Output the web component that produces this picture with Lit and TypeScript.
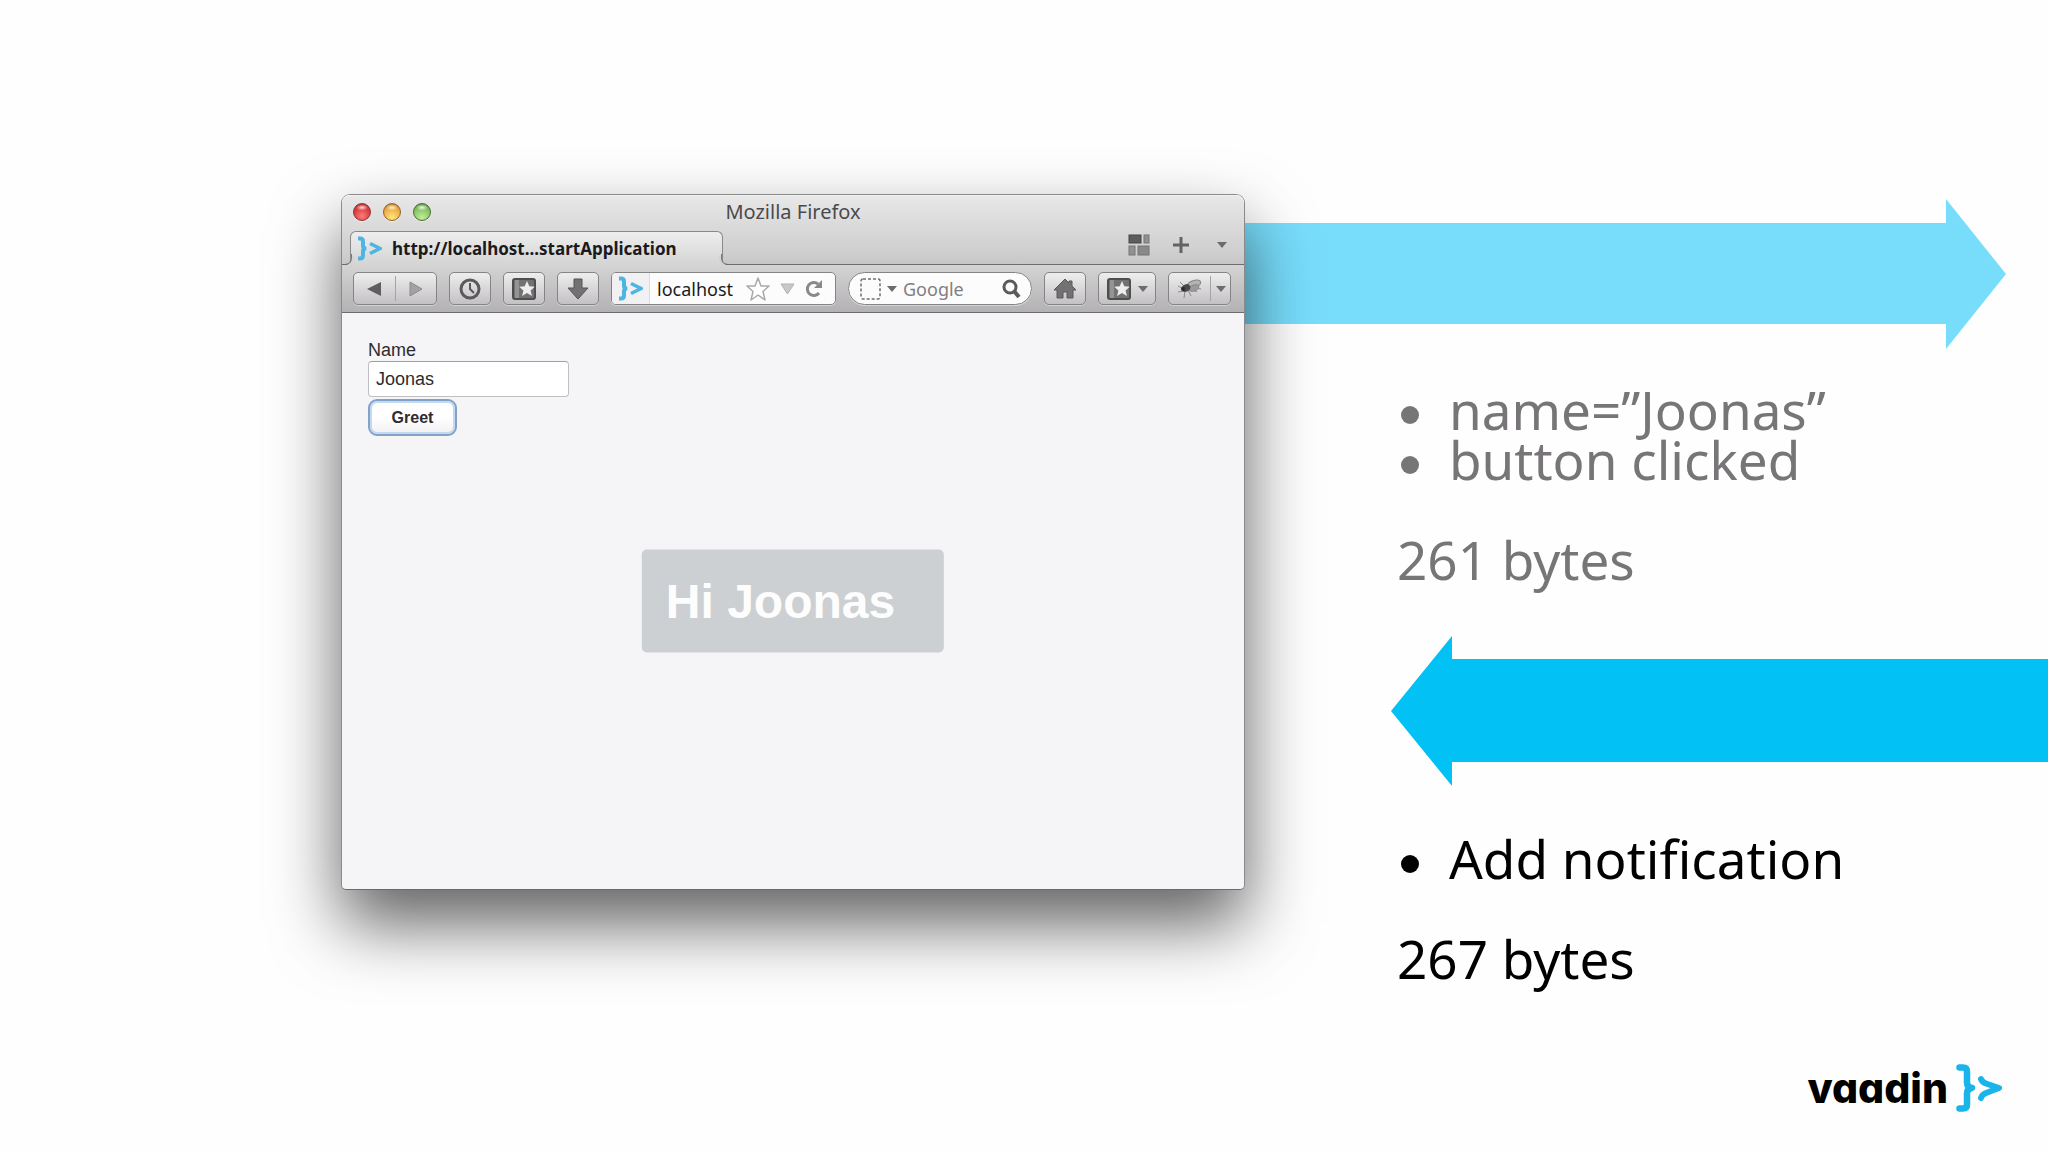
import { LitElement, html, css, svg } from "lit";
import { customElement, property } from "lit/decorators.js";

const caret = (fill = "#6d6c6d") => html`
  <svg width="10" height="6" viewBox="0 0 10 6" aria-hidden="true"><path d="M0 0h10L5 6z" fill=${fill} /></svg>
`;

const brandShapes = svg`
  <path d="M3.500 3.500h3.500q4 0 4 4v11q0 5 5 5.500q-5 .5-5 5.500v11q0 4-4 4h-3.500" fill="none" stroke="currentColor" stroke-width="6.500" stroke-linecap="round" stroke-linejoin="round"/>
  <path d="M25 15q1 3 5 4.500L43 24L30 29Q26 30.500 25 34" fill="none" stroke="currentColor" stroke-width="6" stroke-linecap="round" stroke-linejoin="round"/>
`;

const brandMark = html`
  <svg width="46" height="48" viewBox="0 0 46 48" aria-hidden="true">${brandShapes}</svg>
`;

const smallMark = html`
  <svg width="24" height="25" viewBox="0 0 24 25" fill="none" stroke="currentColor" aria-hidden="true">
    <path d="M0 2.500h2q3 0 3 3v4.500q0 2 3 2.500q-3 .5-3 2.500v4.500q0 3-3 3h-2" stroke-width="4" />
    <path d="M12 7.500L22 12.500L12 17.500" stroke-width="3.500" />
  </svg>
`;

const bookmarkIcon = html`
  <svg width="24" height="22" viewBox="0 0 24 22" aria-hidden="true">
    <rect x="1" y="1" width="22" height="20" rx="2" fill="#737273" stroke="#4f4e4f" stroke-width="2" />
    <path d="M3 2h4v18H3z" fill="#959495" />
    <path d="M15 3l2.300 5.200l5.500.5l-4.200 3.700l1.300 5.600l-4.900-3l-4.900 3l1.300-5.600l-4.200-3.700l5.500-.5z" fill="#eeedee" />
  </svg>
`;

@customElement("flow-arrow")
export class FlowArrow extends LitElement {
  @property({ reflect: true }) direction: "out" | "in" = "out";

  static styles = css`
    :host { display: block; height: 150px; }
    .shape { height: 100%; }
    :host([direction="out"]) .shape {
      background: #78ddfb;
      clip-path: polygon(0 24px, calc(100% - 60px) 24px, calc(100% - 60px) 0, 100% 50%,
        calc(100% - 60px) 100%, calc(100% - 60px) calc(100% - 25px), 0 calc(100% - 25px));
    }
    :host([direction="in"]) .shape {
      background: #02c1f5;
      clip-path: polygon(0 50%, 61px 0, 61px 23px, 100% 23px, 100% calc(100% - 24px),
        61px calc(100% - 24px), 61px 100%);
    }
  `;

  render() {
    return html`<div class="shape"></div>`;
  }
}

@customElement("browser-window")
export class BrowserWindow extends LitElement {
  static styles = css`
    :host { display: block; }
    * { box-sizing: border-box; }
    svg { display: block; flex: none; }
    button, input { font: inherit; color: inherit; margin: 0; padding: 0; border: 0; background: none; outline: 0; }
    .window {
      position: relative;
      border: 1px solid #8b8a8b;
      border-bottom-color: #6b6a6b;
      border-radius: 9px 9px 5px 5px;
      background: #f5f4f7;
      box-shadow: 0 34px 68px rgba(0, 0, 0, 0.62);
      font-family: "Noto Sans", "Open Sans", sans-serif;
    }
    .chrome {
      border-radius: 8px 8px 0 0;
      background: linear-gradient(#e9e8e9, #cfcecf 50%, #a7a5a7);
      border-bottom: 1px solid #6e6d6e;
      box-shadow: inset 0 1px 0 #f2f2f2;
    }
    .titlebar {
      display: grid;
      grid-template-columns: 1fr auto 1fr;
      align-items: center;
      height: 34px;
      padding: 0 11px;
    }
    .lights { display: flex; gap: 12px; }
    .light {
      width: 18px;
      height: 18px;
      border-radius: 50%;
      border: 1px solid;
      box-shadow: 0 1px 0 rgba(255, 255, 255, 0.5);
    }
    .close { border-color: #8e3433; background: radial-gradient(ellipse 6px 3px at 50% 22%, #fbdcdc, transparent), radial-gradient(circle at 50% 75%, #fb7d76, #d93a3c 60%, #a72f30); }
    .minimize { border-color: #936326; background: radial-gradient(ellipse 6px 3px at 50% 22%, #fdf0d8, transparent), radial-gradient(circle at 50% 85%, #fbe97a, #eeac45 60%, #b57728); }
    .zoom { border-color: #48702f; background: radial-gradient(ellipse 6px 3px at 50% 22%, #ecf8e4, transparent), radial-gradient(circle at 50% 85%, #c3ec9c, #85c364 60%, #568a3c); }
    .title { font-size: 20px; line-height: 24px; color: #4b4a4b; font-weight: 400; margin: 0; }
    .tabstrip {
      display: flex;
      align-items: flex-end;
      justify-content: space-between;
      height: 36px;
      padding: 0 17px 0 8px;
      border-bottom: 1px solid #6e6d6e;
    }
    .tab {
      position: relative;
      display: flex;
      align-items: center;
      gap: 10px;
      width: 373px;
      height: 34px;
      margin-bottom: -1px;
      padding: 0 7px;
      border: 1px solid #8a898a;
      border-bottom: 0;
      border-radius: 6px 6px 0 0;
      background: linear-gradient(#eeeeee, #d5d4d5);
      color: #1b1a1b;
      font-size: 17px;
      font-weight: 700;
      white-space: nowrap;
    }
    .tab::before, .tab::after {
      content: "";
      position: absolute;
      bottom: 0;
      width: 8px;
      height: 10px;
      border-bottom: 1px solid #6e6d6e;
    }
    .tab::before {
      left: -8px;
      border-right: 1px solid #7a797a;
      border-bottom-right-radius: 7px;
      box-shadow: 2px 2px 0 #d5d4d5;
    }
    .tab::after {
      right: -8px;
      border-left: 1px solid #7a797a;
      border-bottom-left-radius: 7px;
      box-shadow: -2px 2px 0 #d5d4d5;
    }
    .brand { display: flex; color: #4cb5e2; }
    .strip-tools { display: flex; align-items: center; gap: 23px; height: 100%; padding-bottom: 3px; }
    .strip-tools button { display: flex; }
    .strip-tools .list { margin-left: 5px; }
    .toolbar {
      position: relative;
      display: flex;
      align-items: center;
      gap: 12px;
      height: 47px;
      padding: 0 13px 0 11px;
      background: linear-gradient(#d5d4d5, #b3b1b3);
    }
    .tool, .pair, .address, .search {
      display: flex;
      align-items: center;
      justify-content: center;
      height: 33px;
      border: 1px solid #858485;
      border-radius: 5px;
      box-shadow: 0 1px 0 rgba(255, 255, 255, 0.4);
    }
    .tool, .pair { flex: none; background: linear-gradient(#efeeef, #c3c1c3); }
    .tool { width: 42px; gap: 7px; }
    .tool.wide { width: 58px; }
    .pair button { display: flex; align-items: center; justify-content: center; height: 25px; }
    .pair button + button { border-left: 1px solid #a5a4a5; }
    .history { width: 84px; }
    .history button { flex: 1; }
    .bug { width: 63px; }
    .bug button:first-child { flex: 1; }
    .bug button:last-child { width: 20px; }
    .address { flex: 1; min-width: 0; background: #fdfcfd; justify-content: flex-start; overflow: hidden; padding-right: 12px; }
    .identity { display: flex; align-items: center; justify-content: center; width: 38px; height: 100%; border-right: 1px solid #dddcdd; background: #f1f0f2; color: #4cb5e2; }
    .address input { flex: 1; width: 0; padding-left: 7px; font-size: 18px; color: #1b1a1b; }
    .address button { display: flex; }
    .address .marks { display: flex; align-items: center; gap: 10px; }
    .search { width: 184px; border-radius: 17px; background: #fdfcfd; padding: 0 10px 0 11px; gap: 6px; }
    .search input { flex: 1; width: 0; font-size: 18px; }
    .search input::placeholder { color: #807f80; opacity: 1; }
    .search button { display: flex; }
    .page {
      min-height: 50vh;
      padding: 26px;
      font-family: "Liberation Sans", Arial, sans-serif;
      font-size: 18px;
      color: #2d2c2e;
    }
    .form { display: flex; flex-direction: column; align-items: flex-start; }
    .form label { line-height: 22px; }
    .field {
      width: 201px;
      height: 36px;
      padding: 0 7px;
      border: 1px solid #c0bfc1;
      border-top-color: #a09fa1;
      border-radius: 4px;
      background: #ffffff;
      margin-bottom: 2px;
    }
    .greet {
      width: 89px;
      height: 37px;
      border: 2px solid #83a2c8;
      border-radius: 9px;
      background: linear-gradient(#ffffff 50%, #f0f0f2);
      box-shadow: inset 0 0 0 2px #c4d9f0;
      font-size: 16px;
      font-weight: 700;
    }
    .notice {
      position: absolute;
      top: calc(50% + 59px);
      left: 50%;
      transform: translate(-50%, -50%);
      padding: 24px 49px 24px 24px;
      border-radius: 5px;
      background: #cdd0d2;
      color: #fdfdfe;
      font-size: 48px;
      font-weight: 700;
      line-height: 55px;
      white-space: nowrap;
    }
  `;

  render() {
    return html`
      <section class="window">
        <header class="chrome">
          <div class="titlebar">
            <div class="lights">
              <button class="light close" aria-label="Close"></button>
              <button class="light minimize" aria-label="Minimize"></button>
              <button class="light zoom" aria-label="Zoom"></button>
            </div>
            <h1 class="title">Mozilla Firefox</h1>
          </div>
          <div class="tabstrip">
            <button class="tab">
              <span class="brand">${smallMark}</span>
              <span>http://localhost...startApplication</span>
            </button>
            <div class="strip-tools">
              <button aria-label="Tab groups">
                <svg width="22" height="22" viewBox="0 0 22 22">
                  <rect x="1" y="1" width="12" height="8" fill="#5e5d5e" stroke="#454445" />
                  <rect x="16" y="1" width="5" height="8" fill="#929192" stroke="#757475" />
                  <rect x="1" y="12" width="6" height="9" fill="#929192" stroke="#757475" />
                  <rect x="10" y="12" width="11" height="9" fill="#8a898a" stroke="#757475" />
                </svg>
              </button>
              <button aria-label="New tab">
                <svg width="16" height="16" viewBox="0 0 16 16"><path d="M8 0v16M0 8h16" stroke="#656465" stroke-width="3" /></svg>
              </button>
              <button class="list" aria-label="List all tabs">${caret()}</button>
            </div>
          </div>
          <div class="toolbar">
            <div class="pair history">
              <button aria-label="Back">
                <svg width="14" height="16" viewBox="0 0 14 16"><path d="M14 1v14L0 8z" fill="#5f5e5f" /></svg>
              </button>
              <button aria-label="Forward">
                <svg width="14" height="16" viewBox="0 0 14 16"><path d="M1 1v14L13 8z" fill="#a3a2a3" stroke="#8b8a8b" /></svg>
              </button>
            </div>
            <button class="tool" aria-label="History">
              <svg width="22" height="22" viewBox="0 0 22 22" fill="none" stroke="#5b5a5b">
                <circle cx="11" cy="11" r="9" stroke-width="3" />
                <path d="M11 5v6l4 4" stroke-width="2" />
              </svg>
            </button>
            <button class="tool" aria-label="Bookmarks">${bookmarkIcon}</button>
            <button class="tool" aria-label="Downloads">
              <svg width="22" height="22" viewBox="0 0 22 22"><path d="M7 1h8v9h6L11 21L1 10h6z" fill="#737273" stroke="#555455" /></svg>
            </button>
            <div class="address">
              <span class="identity">${smallMark}</span>
              <input aria-label="Address" value="localhost" />
              <div class="marks">
                <button aria-label="Bookmark this page">
                  <svg width="24" height="24" viewBox="0 0 24 24"><path d="M12 1l3 8h8l-6 5.500l2 8.500l-7-5l-7 5l2-8.500L1 9h8z" fill="#fff" stroke="#aaa9aa" stroke-width="1.500" stroke-linejoin="round" /></svg>
                </button>
                <button aria-label="Show history">
                  <svg width="15" height="12" viewBox="0 0 15 12"><path d="M1 1h13L7.500 11z" fill="#c9c8c9" stroke="#b3b2b3" /></svg>
                </button>
                <button aria-label="Reload">
                  <svg width="18" height="18" viewBox="0 0 18 18"><path d="M14 13a6.500 6.500 0 1 1-1-9" fill="none" stroke="#8a898a" stroke-width="3" /><path d="M17 0v8H9z" fill="#8a898a" /></svg>
                </button>
              </div>
            </div>
            <div class="search">
              <svg width="21" height="22" viewBox="0 0 21 22"><rect x="1" y="1" width="19" height="20" rx="2" fill="none" stroke="#6f6e6f" stroke-width="1.500" stroke-dasharray="3 2" /></svg>
              ${caret()}
              <input aria-label="Search" placeholder="Google" />
              <button aria-label="Go">
                <svg width="19" height="20" viewBox="0 0 19 20" fill="none" stroke="#5b5a5b"><circle cx="8" cy="8" r="6" stroke-width="3" /><path d="M12 12l5 6" stroke-width="4" /></svg>
              </button>
            </div>
            <button class="tool" aria-label="Home">
              <svg width="24" height="21" viewBox="0 0 24 21"><path d="M12 1L1 12h3v8h6v-6h4v6h6v-8h3l-4-4V3h-3v2z" fill="#737273" stroke="#5a595a" stroke-linejoin="round" /></svg>
            </button>
            <button class="tool wide" aria-label="Bookmarks menu">${bookmarkIcon}${caret()}</button>
            <div class="pair bug">
              <button aria-label="Inspect">
                <svg width="25" height="20" viewBox="0 0 25 20">
                  <path d="M1 7l6 3M3 3l5 5M1 13l6-1M8 12l-1 7M11 11l3 6M18 9l6 1M14 9l6 4" stroke="#8a898a" fill="none" />
                  <ellipse cx="17" cy="5" rx="7" ry="3.500" transform="rotate(-18 17 5)" fill="#b5b4b5" stroke="#858485" />
                  <ellipse cx="17" cy="9" rx="5" ry="3" transform="rotate(-20 17 9)" fill="#9c9b9c" stroke="#858485" />
                  <ellipse cx="9" cy="9" rx="4.500" ry="3.500" transform="rotate(-25 9 9)" fill="#4a494a" />
                  <circle cx="6" cy="10" r="2" fill="#2c2b2c" />
                </svg>
              </button>
              <button aria-label="Inspect options">${caret()}</button>
            </div>
          </div>
        </header>
        <div class="page">
          <div class="form">
            <label for="name">Name</label>
            <input id="name" class="field" value="Joonas" />
            <button class="greet">Greet</button>
          </div>
          <div class="notice" role="status">Hi Joonas</div>
        </div>
      </section>
    `;
  }
}

@customElement("app-root")
export class AppRoot extends LitElement {
  static styles = css`
    :host { display: block; }
    * { box-sizing: border-box; }
    .slide {
      display: grid;
      grid-template-columns: minmax(0, 341fr) minmax(0, 904fr) minmax(0, 803fr);
      min-height: 100vh;
      background: #fefefe;
      font-family: "Noto Sans", "Open Sans", sans-serif;
      overflow: hidden;
    }
    .browser { grid-column: 2; margin-top: 194px; position: relative; z-index: 1; align-self: start; }
    .traffic { display: flex; flex-direction: column; padding-top: 199px; }
    .request { margin-right: 42px; }
    .response { margin-left: 146px; margin-bottom: 12px; }
    .message {
      padding: 36px 0 50px 152px;
      font-size: 53px;
      line-height: 50px;
      color: #000000;
    }
    .message.past { color: #777577; }
    .message ul { list-style: none; margin: 0 0 50px; padding: 0; }
    .message.past + .response { margin-top: 1px; }
    .message li { display: flex; align-items: center; gap: 30px; padding-left: 4px; white-space: nowrap; }
    .message li::before { content: ""; width: 18px; height: 18px; margin-top: 10px; border-radius: 50%; background: currentColor; }
    .message p { margin: 0; }
    .logo {
      display: flex;
      align-items: center;
      gap: 8px;
      margin: auto 46px 40px auto;
      color: #000000;
      text-decoration: none;
    }
    .wordmark {
      font-family: Inter, sans-serif;
      font-feature-settings: "cv11";
      font-weight: 800;
      font-size: 41px;
      line-height: 44px;
    }
    .logo svg { display: block; color: #18b4ea; }
  `;

  render() {
    return html`
      <main class="slide">
        <browser-window class="browser"></browser-window>
        <section class="traffic">
          <flow-arrow class="request" direction="out"></flow-arrow>
          <div class="message past">
            <ul>
              <li>name=”Joonas”</li>
              <li>button clicked</li>
            </ul>
            <p>261 bytes</p>
          </div>
          <flow-arrow class="response" direction="in"></flow-arrow>
          <div class="message">
            <ul>
              <li>Add notification</li>
            </ul>
            <p>267 bytes</p>
          </div>
          <a class="logo" href="#" aria-label="vaadin">
            <span class="wordmark">vaadin</span>
            ${brandMark}
          </a>
        </section>
      </main>
    `;
  }
}
